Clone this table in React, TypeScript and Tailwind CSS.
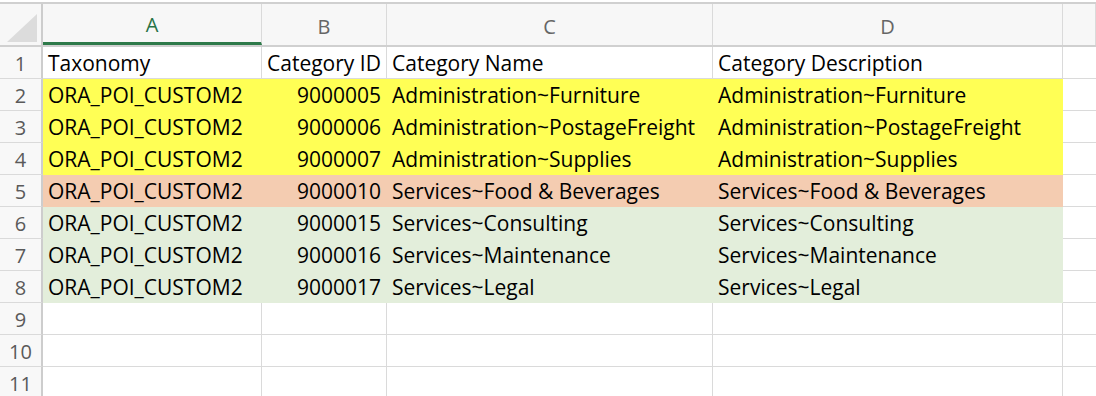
const COLUMNS = [
  { letter: 'A', width: 'w-[219px]', active: true },
  { letter: 'B', width: 'w-[125px]', active: false },
  { letter: 'C', width: 'w-[326px]', active: false },
  { letter: 'D', width: 'w-[350px]', active: false },
  { letter: '', width: 'flex-1', active: false },
];

type Fill = 'none' | 'yellow' | 'peach' | 'green';

const FILLS: Record<Fill, string> = {
  none: 'bg-white border-[#dadada]',
  yellow: 'bg-[#ffff55] border-[#ffff55]',
  peach: 'bg-[#f4ccb1] border-[#f4ccb1]',
  green: 'bg-[#e3eedb] border-[#e3eedb]',
};

const ROWS: { cells: string[]; fill: Fill }[] = [
  { cells: ['Taxonomy', 'Category ID', 'Category Name', 'Category Description'], fill: 'none' },
  { cells: ['ORA_POI_CUSTOM2', '9000005', 'Administration~Furniture', 'Administration~Furniture'], fill: 'yellow' },
  { cells: ['ORA_POI_CUSTOM2', '9000006', 'Administration~PostageFreight', 'Administration~PostageFreight'], fill: 'yellow' },
  { cells: ['ORA_POI_CUSTOM2', '9000007', 'Administration~Supplies', 'Administration~Supplies'], fill: 'yellow' },
  { cells: ['ORA_POI_CUSTOM2', '9000010', 'Services~Food & Beverages', 'Services~Food & Beverages'], fill: 'peach' },
  { cells: ['ORA_POI_CUSTOM2', '9000015', 'Services~Consulting', 'Services~Consulting'], fill: 'green' },
  { cells: ['ORA_POI_CUSTOM2', '9000016', 'Services~Maintenance', 'Services~Maintenance'], fill: 'green' },
  { cells: ['ORA_POI_CUSTOM2', '9000017', 'Services~Legal', 'Services~Legal'], fill: 'green' },
  { cells: ['', '', '', ''], fill: 'none' },
  { cells: ['', '', '', ''], fill: 'none' },
  { cells: ['', '', '', ''], fill: 'none' },
];

const font = 'font-["Open_Sans",Lato,sans-serif]';

export default function App() {
  return (
    <div className={`w-[1096px] h-[396px] overflow-hidden bg-white pt-[2px] ${font}`}>
      {/* column letters */}
      <div className="flex h-[45px] border-t-2 border-b-2 border-[#d0d0d0] bg-[#f7f7f7]">
        <div className="w-[43px] shrink-0 border-r-2 border-[#cdcdcd] flex items-center justify-center">
          <div className="w-0 h-0 mt-[6px] ml-[2px] border-l-[30px] border-l-transparent border-b-[28px] border-b-[#dcdcdc]" />
        </div>
        {COLUMNS.map((col, i) => (
          <div
            key={i}
            className={`${col.width} shrink-0 flex items-center justify-center pt-[4px] text-[20px] border-r border-[#dadada] ${
              col.active ? 'text-[#277346] border-b-[3px] border-b-[#2e7a4a]' : 'text-[#666]'
            }`}
          >
            {col.letter}
          </div>
        ))}
      </div>

      {ROWS.map((row, r) => (
        <div key={r} className="flex h-[32px]">
          <div className="w-[43px] shrink-0 flex items-center justify-center pt-[2px] bg-[#f8f8f8] border-r-2 border-b border-r-[#cdcdcd] border-b-[#dadada] text-[20px] text-[#5a5a5a]">
            {r + 1}
          </div>
          {row.cells.map((text, c) => (
            <div
              key={c}
              className={`${COLUMNS[c].width} shrink-0 flex items-center px-[5px] pt-[2px] border-r border-b text-[21px] text-black whitespace-nowrap ${
                FILLS[row.fill]
              } ${c === 1 && r > 0 ? 'justify-end' : ''}`}
            >
              {text}
            </div>
          ))}
          <div className="flex-1 border-b border-[#dadada]" />
        </div>
      ))}
    </div>
  );
}
